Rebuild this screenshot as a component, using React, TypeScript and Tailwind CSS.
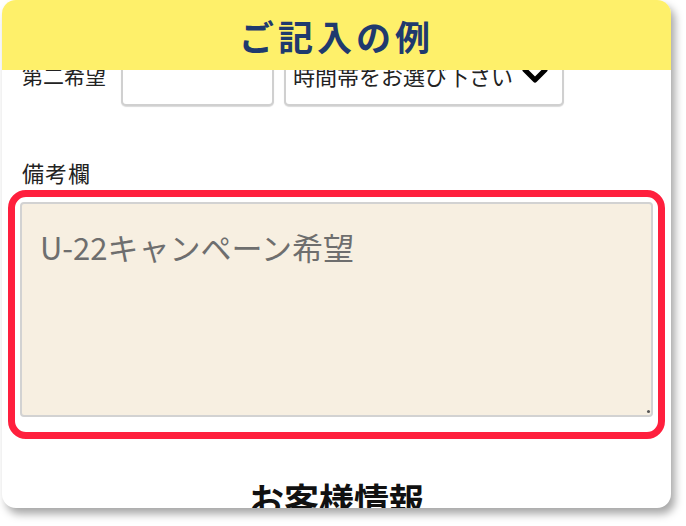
import React from "react";

const jp = { fontFamily: '"Noto Sans CJK JP", "Noto Sans", sans-serif' };

export default function App() {
  return (
    <div className="w-[686px] h-[526px] bg-white" style={jp}>
      <div className="relative ml-[2px] w-[669px] h-[508px] overflow-hidden rounded-[14px] bg-white shadow-[4px_6px_8px_rgba(0,0,0,0.35)]">
        <div className="absolute left-0 top-0 z-10 flex h-[70px] w-full items-center justify-center bg-[#fef06a]">
          <span className="text-[35px] font-bold tracking-[4px] text-[#1f3a6e] leading-none">ご記入の例</span>
        </div>

        <div className="flex flex-col pt-[48px]">
          <div className="flex h-[58px] items-stretch">
            <div className="flex w-[119px] items-end pb-[20px] pl-[20px] text-[21px] leading-none text-[#222]">第二希望</div>
            <div className="w-[153px] rounded-[5px] border-2 border-[#d0d0d0] bg-white shadow-[0_1px_1px_rgba(0,0,0,0.15)]" />
            <div className="ml-[10px] flex w-[280px] items-end justify-between rounded-[5px] border-2 border-[#d0d0d0] bg-white pb-[18px] pl-[7px] pr-[14px] shadow-[0_1px_1px_rgba(0,0,0,0.15)]">
              <span className="text-[22px] leading-none text-[#222]">時間帯をお選び下さい</span>
              <svg width="26" height="18" viewBox="0 0 26 18" className="mb-[2px]">
                <polyline points="3,4 13,14 23,4" fill="none" stroke="#000" strokeWidth="5" strokeLinecap="round" strokeLinejoin="round" />
              </svg>
            </div>
          </div>

          <div className="mt-[55px] pl-[20px] text-[22px] tracking-[1px] leading-none text-[#222]">備考欄</div>

          <div className="mx-[6px] mt-[7px] h-[249px] rounded-[18px] border-[7px] border-[#ff1f3d] bg-white p-[5px]">
            <div className="relative h-[215px] w-full">
              <textarea
                readOnly
                placeholder="U-22キャンペーン希望"
                className="block h-full w-full resize-none rounded-[4px] border-2 border-[#d2d2d2] bg-[#f7efe1] px-[18px] pt-[27px] text-[31px] leading-none text-[#222] outline-none placeholder:text-[#6e6e6e]"
                style={jp}
              />
              <div className="absolute bottom-[4px] right-[3px] h-[3px] w-[3px] rounded-full bg-[#555]" />
            </div>
          </div>

          <div className="mt-[42px] text-center text-[35px] font-bold leading-none text-[#111]">お客様情報</div>
        </div>
      </div>
    </div>
  );
}
